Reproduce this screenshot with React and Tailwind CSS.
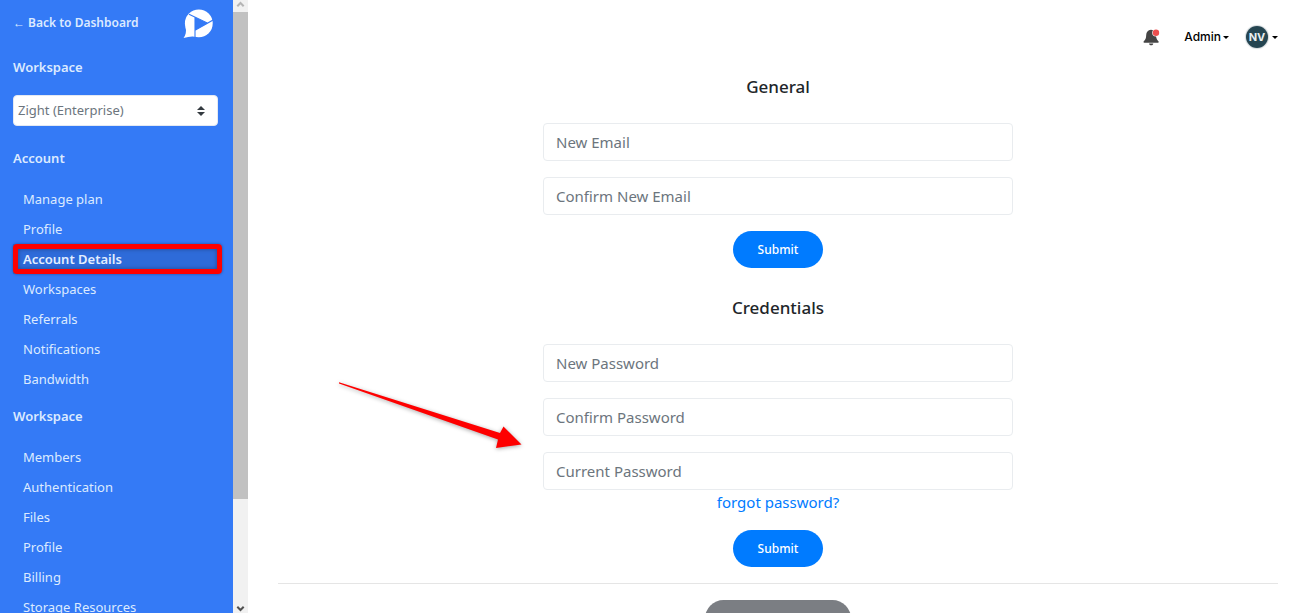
const accountLinks = ["Manage plan", "Profile", "Account Details", "Workspaces", "Referrals", "Notifications", "Bandwidth"];
const workspaceLinks = ["Members", "Authentication", "Files", "Profile", "Billing", "Storage Resources"];

function Logo() {
  return (
    <svg viewBox="0 0 30 30" className="h-[30px] w-[30px]" aria-hidden="true">
      <circle cx="15.8" cy="14.4" r="13.9" fill="#fff" />
      <path d="M2.6 18C3.6 23 2.6 26 0.6 28.9C5 28.3 8 26.6 12.4 27.8Z" fill="#fff" />
      <path d="M12 8.2L24.8 14.2L12 21.2Z" fill="#347af6" />
      <path d="M6 5.2L24.8 14.2M30 11L12 21.2M12 8.2V28" stroke="#347af6" strokeWidth="1.1" fill="none" />
    </svg>
  );
}

function NavList({ items, active }) {
  return (
    <ul>
      {items.map((item) => (
        <li key={item} className="relative">
          <a
            href="#"
            className={
              item === active
                ? "block h-[30px] bg-[#2e6bd9] pl-2.5 font-semibold leading-[30px] text-[#e3eeff]"
                : "block h-[30px] pl-2.5 leading-[30px] text-[#dceaff]"
            }
          >
            {item}
          </a>
          {item === active && (
            <span className="pointer-events-none absolute inset-y-0 -right-1 left-0 rounded-[4px] border-[5px] border-[#fe0000] shadow-[0_0_3px_rgba(0,0,0,0.4),inset_0_0_4px_rgba(0,0,0,0.35)]" />
          )}
        </li>
      ))}
    </ul>
  );
}

function Heading({ children }) {
  return <h2 className="text-[13px] font-semibold leading-5 text-[#dceaff]">{children}</h2>;
}

function Sidebar() {
  return (
    <aside className="flex w-[248px] shrink-0 overflow-hidden bg-[#347af6] text-[13px]">
      <div className="min-w-0 flex-1 overflow-hidden pl-[13px] pr-[15px]">
        <div className="flex items-start justify-between pr-[5px] pt-[9px]">
          <a href="#" className="mt-1 whitespace-nowrap text-[12px] font-semibold leading-5 text-[#dceaff]">
            ← Back to Dashboard
          </a>
          <Logo />
        </div>
        <div className="mt-[18px]">
          <Heading>Workspace</Heading>
        </div>
        <div className="relative mt-[18px]">
          <select
            aria-label="Workspace"
            className="block h-[31px] w-full appearance-none rounded-[4px] border border-[#e4e9f2] bg-white pl-1 text-[13px] text-[#6c757d]"
          >
            <option>Zight (Enterprise)</option>
          </select>
          <svg viewBox="0 0 8 10" className="pointer-events-none absolute right-[13px] top-[11px] h-[10px] w-2" aria-hidden="true">
            <path d="M4 0L8 4H0ZM4 10L0 6H8Z" fill="#343a40" />
          </svg>
        </div>
        <div className="mb-4 mt-[22px]">
          <Heading>Account</Heading>
        </div>
        <NavList items={accountLinks} active="Account Details" />
        <div className="mb-4 mt-3">
          <Heading>Workspace</Heading>
        </div>
        <NavList items={workspaceLinks} />
      </div>
      <div className="flex w-[15px] shrink-0 flex-col bg-[#f1f1f1]" aria-hidden="true">
        <svg viewBox="0 0 15 12" className="h-3 w-[15px] shrink-0">
          <path d="M4.3 6.3L7.5 3L10.7 6.3" stroke="#b5b5b5" strokeWidth="2" fill="none" />
        </svg>
        <div className="grow-[487] bg-[#c1c1c1]" />
        <div className="grow-[102]" />
        <svg viewBox="0 0 15 12" className="h-3 w-[15px] shrink-0">
          <path d="M4.3 5.7L7.5 9L10.7 5.7" stroke="#505050" strokeWidth="2" fill="none" />
        </svg>
      </div>
    </aside>
  );
}

function Caret() {
  return (
    <svg viewBox="0 0 6 3" className="h-[3px] w-1.5" aria-hidden="true">
      <path d="M0 0H6L3 3Z" fill="#000" />
    </svg>
  );
}

function Field({ label, type }) {
  return (
    <input
      type={type}
      aria-label={label}
      placeholder={label}
      className="block h-[38px] w-full rounded-[4px] border border-[#e9ecef] bg-white px-3 text-[15px] text-[#495057] placeholder:text-[#6c757d]"
    />
  );
}

function Title({ children }) {
  return <h1 className="mb-6 text-center text-[17px] font-medium leading-6 text-[#212529]">{children}</h1>;
}

function Submit() {
  return (
    <button type="submit" className="mx-auto block h-[37px] w-[90px] rounded-full bg-[#007bff] pt-px text-[12px] font-medium text-white">
      Submit
    </button>
  );
}

export default function App() {
  return (
    <div className="flex h-screen overflow-hidden bg-white font-['Noto_Sans','Open_Sans',sans-serif]">
      <Sidebar />
      <main className="relative min-w-0 flex-1 overflow-hidden pl-[30px] pr-[26px]">
        <header className="flex h-[75px] items-center justify-end pb-px font-[Inter,sans-serif]">
          <button type="button" aria-label="Notifications" className="mr-6">
            <svg viewBox="0 0 17 17" className="h-[17px] w-[17px]" aria-hidden="true">
              <path d="M8 0.8C4.8 1 3.3 3.2 3.2 6C3.1 9.5 2.5 10.5 0.8 12.2C0.2 12.9 0.5 13.7 1.3 13.7H15C15.8 13.7 16 12.9 15.4 12.2C13.8 10.5 13.2 9.5 13 6C12.8 3.2 11.2 1 8 0.8Z" fill="#454545" />
              <path d="M6 14.4H10.3C10 17 6.3 17 6 14.4Z" fill="#454545" />
              <circle cx="13" cy="3.8" r="3.8" fill="#fff" />
              <circle cx="13" cy="3.8" r="3.2" fill="#ed4f4f" />
            </svg>
          </button>
          <button type="button" className="mr-[17px] flex items-center gap-0.5 text-[12px] font-medium text-black">
            Admin
            <Caret />
          </button>
          <button type="button" aria-label="NV account menu" className="flex items-center gap-1">
            <span className="flex h-[22px] w-[22px] items-center justify-center rounded-full bg-[#254551] text-[11px] font-bold text-[#e8eef0] shadow-[0_0_1px_1px_#d4dadd]">
              NV
            </span>
            <Caret />
          </button>
        </header>
        <form className="mx-auto max-w-[470px]">
          <Title>General</Title>
          <div className="mb-4 flex flex-col gap-4">
            <Field label="New Email" type="email" />
            <Field label="Confirm New Email" type="email" />
          </div>
          <Submit />
        </form>
        <form className="mx-auto mt-7 max-w-[470px]">
          <Title>Credentials</Title>
          <div className="flex flex-col gap-4">
            <Field label="New Password" type="password" />
            <Field label="Confirm Password" type="password" />
            <Field label="Current Password" type="password" />
          </div>
          <div className="mb-4 text-center leading-6">
            <a href="#" className="text-[15px] text-[#007bff]">forgot password?</a>
          </div>
          <Submit />
        </form>
        <hr className="mb-4 mt-4 border-[#e5e5e5]" />
        <button type="button" aria-label="Delete account" className="mx-auto block h-[37px] w-[146px] rounded-full bg-[#7b7e83]" />
        <svg viewBox="0 0 190 70" className="pointer-events-none absolute left-[88px] top-[380px] h-[70px] w-[190px] drop-shadow-[0_1px_2px_rgba(0,0,0,0.35)]" aria-hidden="true">
          <path d="M3 2.2L164 53L167.5 46.5L185.5 64.5L160 68L162 59.5L3 3.5Z" fill="#fe0000" />
        </svg>
      </main>
    </div>
  );
}
